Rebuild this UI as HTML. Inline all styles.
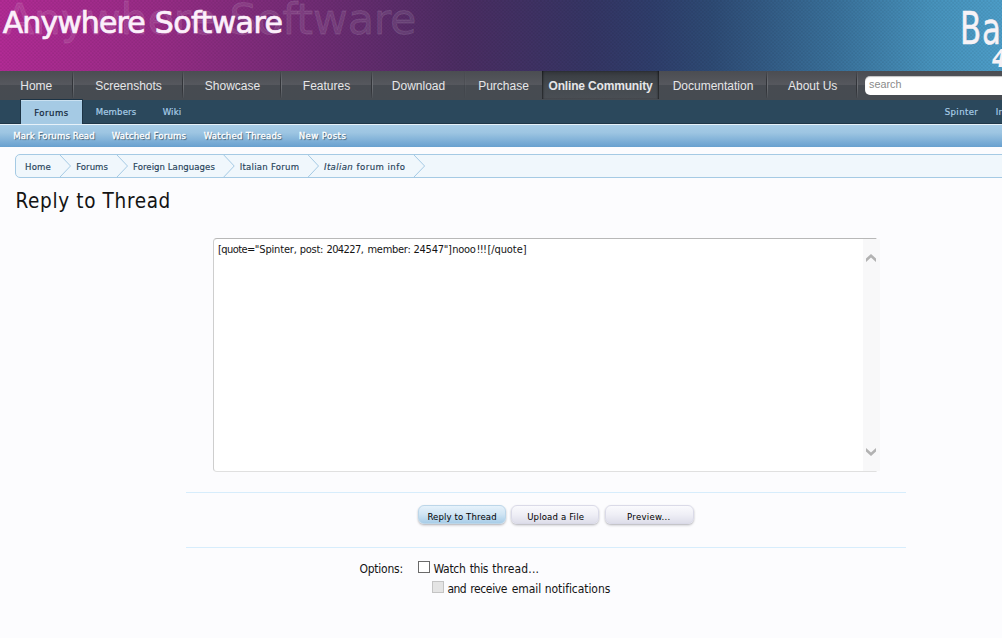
<!DOCTYPE html>
<html lang="en">
<head>
<meta charset="utf-8">
<title>Reply to Thread | Anywhere Software</title>
<style>
html,body{margin:0;padding:0;}
body{width:1002px;height:638px;overflow:hidden;background:#fcfcfe;font-family:"Liberation Sans",sans-serif;font-size:10px;color:#141414;position:relative;}
.L{font-family:"Liberation Sans",sans-serif;}
.D{font-family:"DejaVu Sans","Liberation Sans",sans-serif;}
.C{font-family:"DejaVu Sans Condensed","Liberation Sans",sans-serif;}
.tx{position:absolute;white-space:nowrap;display:block;}
#hdr{position:absolute;left:0;top:0;width:1002px;height:71px;overflow:hidden;
 background:linear-gradient(90deg,#b32b96 0px,#b02b94 12px,#972c86 162px,#712c75 312px,#4b2d63 462px,#353665 592px,#2f3e6c 652px,#2e4b75 712px,#39709a 832px,#4793bd 932px,#4d9ec9 1002px);}
#hdr .dots{position:absolute;left:0;top:0;display:block;}
#hdr .shade{display:none;}
#hdr .ghost{color:rgba(255,255,255,.09);}
#hdr .ttl{color:#fbeefa;-webkit-text-stroke:0.5px #fbeefa;}
#hdr .logo{position:absolute;left:960.3px;top:3px;-webkit-text-stroke:0.5px #f6f2f6;font-size:44px;line-height:52px;color:#f6f2f6;white-space:nowrap;transform:scaleX(.78);transform-origin:0 0;letter-spacing:1px;}
#hdr .logo4{position:absolute;left:991.500px;top:44px;font-style:italic;font-weight:bold;font-size:25px;line-height:30px;color:#f6f2f6;transform:scaleX(.85);transform-origin:0 0;}
#nav{position:absolute;left:0;top:71px;width:1002px;height:28.5px;background:linear-gradient(180deg,#4b4d52 0,#56585e 48%,#474b51 50%,#464b51 100%);font-size:12px;}
#nav a{position:absolute;top:0;height:28px;line-height:30px;text-align:center;color:#e6e6e8;text-decoration:none;white-space:nowrap;}
#nav .sep{position:absolute;top:1px;width:1px;height:26px;background:linear-gradient(180deg,rgba(50,52,57,.2),rgba(50,52,57,1) 30%,rgba(50,52,57,1) 70%,rgba(50,52,57,.2));}
#nav .sep:after{content:"";position:absolute;left:1px;top:0;width:1px;height:26px;background:linear-gradient(180deg,rgba(110,113,118,.1),rgba(110,113,118,.9) 40%,rgba(110,113,118,.9) 60%,rgba(110,113,118,.1));}
#nav a.act{font-weight:bold;letter-spacing:-0.17px;background:linear-gradient(180deg,#303338 0,#3c4045 18%,#454a4f 55%,#494e54 100%);box-shadow:inset 2px 0 2px -1px rgba(0,0,0,.55),inset -2px 0 2px -1px rgba(0,0,0,.55);color:#e6e6e8;}
#srch{position:absolute;left:865px;top:4.5px;width:160px;height:19px;background:#fff;border-radius:5px;box-shadow:inset 0 1px 1px rgba(0,0,0,.25);color:#8a8a8a;font-size:10.8px;line-height:17.5px;text-indent:4px;}
#tabs{position:absolute;left:0;top:99.5px;width:1002px;height:24.5px;background:#2b485c;box-shadow:inset 0 -1px 0 #1f3749;}
#tabs .sel{position:absolute;left:20px;top:-0.5px;width:63px;height:25px;box-sizing:border-box;border:1px solid #1c3345;border-bottom:0;background:#a5cae4;box-shadow:inset 0 1px 0 #c9e0f0;}
.tabtx{color:#a5cae4;}
.seltx{color:#18303f;}
#sub{position:absolute;left:0;top:124px;width:1002px;height:23px;background:linear-gradient(180deg,#a7cce6 0,#9dc5e2 35%,#68a0cf 100%);border-top:1px solid #e6f1f9;box-sizing:border-box;}
.subtx{color:#fff;text-shadow:1px 1px 1px #2b485c;}
#bc{position:absolute;left:15px;top:154px;width:1000px;height:24px;box-sizing:border-box;border:1px solid #a5cae4;border-radius:5px 0 0 5px;background:#f0f7fc;}
#bc svg{position:absolute;left:0;top:0;}
.bctx{color:#2b485c;}
#ta{position:absolute;left:213px;top:238px;width:664px;height:234px;box-sizing:border-box;background:#fff;border:1px solid #c0c0c0;border-color:#b8b8b8 #e4e4e4 #e0e0e0 #cecece;border-radius:4px 1px 1px 4px;}
#sb{position:absolute;left:863px;top:239px;width:16.5px;height:232px;background:#f8f8f9;}
#sb svg{display:block;}
.hr{position:absolute;left:186px;width:720px;height:1px;background:#d7edfc;}
.btn{position:absolute;top:505px;height:19px;box-sizing:border-box;border:1px solid #dadae8;border-radius:6px;background:linear-gradient(180deg,#fafafd 0,#efeff6 50%,#dedeea 100%);box-shadow:0 1px 2px rgba(0,0,20,.22),0 2px 3px rgba(0,0,20,.08);}
.btn.pri{background:linear-gradient(180deg,#e6f2fb 0,#cfe4f3 50%,#a8cde8 100%);border-color:#bcd6e9;}
.cb{position:absolute;width:12px;height:12px;box-sizing:border-box;border:1px solid #6a6a6a;background:#fff;}
.cb.dis{border-color:#c4c4c4;background:#e4e4e4;}
</style>
</head>
<body>
<div id="hdr"><svg class="dots" width="1002" height="71" viewBox="0 0 1002 71"><defs><pattern id="dp" width="3.6" height="3.6" patternUnits="userSpaceOnUse"><circle cx="0.9" cy="0.9" r="0.5" fill="#000" fill-opacity=".32"/><circle cx="2.7" cy="2.7" r="0.5" fill="#000" fill-opacity=".32"/></pattern></defs><rect width="1002" height="71" fill="url(#dp)"/></svg><div class="shade"></div>
<span class="tx D" style="left:4.7px;top:-8.88px;font-size:43px;line-height:56px;letter-spacing:-0.347px;color:rgba(255,255,255,.10);-webkit-text-stroke:0.9px rgba(255,255,255,.10)">Anywhere Software</span>
<span class="tx D" style="left:2.7px;top:3.12px;font-size:30px;line-height:39px;color:#fcf0fb;-webkit-text-stroke:0.7px #fcf0fb"><span style="letter-spacing:-0.917px">Anywhere</span> <span style="letter-spacing:-0.569px;margin-left:0.37px">Software</span></span>
<div class="logo C">Basic</div><div class="logo4 D">4</div>
</div>
<div id="nav">
<a style="left:0;width:72.500px">Home</a><span class="sep" style="left:72px"></span>
<a style="left:74px;width:109px">Screenshots</a><span class="sep" style="left:182px"></span>
<a style="left:184.500px;width:96px">Showcase</a><span class="sep" style="left:280px"></span>
<a style="left:282.500px;width:88px">Features</a><span class="sep" style="left:371px"></span>
<a style="left:372px;width:93px">Download</a><span class="sep" style="left:464px;opacity:.2"></span>
<a style="left:467px;width:73px">Purchase</a>
<a class="act" style="left:542px;width:117px">Online Community</a>
<a style="left:660px;width:106px">Documentation</a><span class="sep" style="left:766px"></span>
<a style="left:768.700px;width:88px">About Us</a><span class="sep" style="left:856px"></span>
<div id="srch">search</div>
</div>
<div id="tabs"><div class="sel"></div></div>
<span class="tx C" style="left:34.2px;top:106.71px;font-size:9.5px;line-height:12px;letter-spacing:0.514px;color:#12263a;-webkit-text-stroke:0.2px #12263a">Forums</span>
<span class="tx C" style="left:95.7px;top:105.71px;font-size:9.5px;line-height:12px;letter-spacing:0.139px;color:#a8cde7;-webkit-text-stroke:0.2px #a8cde7">Members</span>
<span class="tx C" style="left:162.7px;top:105.71px;font-size:9.5px;line-height:12px;letter-spacing:0.162px;color:#a8cde7;-webkit-text-stroke:0.2px #a8cde7">Wiki</span>
<span class="tx C" style="left:944.7px;top:105.71px;font-size:9.5px;line-height:12px;letter-spacing:0.403px;color:#a8cde7;-webkit-text-stroke:0.2px #a8cde7">Spinter</span>
<span class="tx C" style="left:995.7px;top:105.71px;font-size:9.5px;line-height:12px;letter-spacing:0.403px;color:#a8cde7;-webkit-text-stroke:0.2px #a8cde7">Inbox</span>
<div id="sub"></div>
<span class="tx C" style="left:13.2px;top:129.71px;font-size:9.5px;line-height:12px;letter-spacing:0.134px;color:#fff;-webkit-text-stroke:0.3px #fff;text-shadow:1px 1px 1px #2b485c">Mark Forums Read</span>
<span class="tx C" style="left:111.7px;top:129.71px;font-size:9.5px;line-height:12px;letter-spacing:0.224px;color:#fff;-webkit-text-stroke:0.3px #fff;text-shadow:1px 1px 1px #2b485c">Watched Forums</span>
<span class="tx C" style="left:203.7px;top:129.71px;font-size:9.5px;line-height:12px;letter-spacing:0.256px;color:#fff;-webkit-text-stroke:0.3px #fff;text-shadow:1px 1px 1px #2b485c">Watched Threads</span>
<span class="tx C" style="left:298.7px;top:129.71px;font-size:9.5px;line-height:12px;letter-spacing:0.438px;color:#fff;-webkit-text-stroke:0.3px #fff;text-shadow:1px 1px 1px #2b485c">New Posts</span>
<div id="bc">
<svg width="987" height="22" viewBox="0 0 987 22" fill="none" stroke="#a5cae4" stroke-width="1">
<path d="M44 0 L54.500 11 L44 22"/><path d="M101 0 L111.500 11 L101 22"/><path d="M207.800 0 L218.200 11 L207.800 22"/><path d="M292.200 0 L302.500 11 L292.200 22"/><path d="M398 0 L408.600 11 L398 22"/>
</svg>
</div>
<span class="tx C" style="left:25.1px;top:160.71px;font-size:9.5px;line-height:12px;letter-spacing:0.138px;color:#26425a;-webkit-text-stroke:0.15px #26425a">Home</span>
<span class="tx C" style="left:76.2px;top:160.71px;font-size:9.5px;line-height:12px;letter-spacing:0.047px;color:#26425a;-webkit-text-stroke:0.15px #26425a">Forums</span>
<span class="tx C" style="left:133.1px;top:160.71px;font-size:9.5px;line-height:12px;letter-spacing:0.050px;color:#26425a;-webkit-text-stroke:0.15px #26425a">Foreign Languages</span>
<span class="tx C" style="left:239.7px;top:160.71px;font-size:9.5px;line-height:12px;letter-spacing:0.254px;color:#26425a;-webkit-text-stroke:0.15px #26425a">Italian Forum</span>
<span class="tx C" style="left:324.0px;top:160.71px;font-size:9.5px;line-height:12px;color:#26425a;-webkit-text-stroke:0.15px #26425a"><span style="letter-spacing:0.369px"><i>Italian</i></span> <span style="letter-spacing:0.457px;margin-left:0.79px">forum info</span></span>
<span class="tx C" style="left:15.5px;top:187.61px;font-size:20.5px;line-height:27px;letter-spacing:0.656px;color:#141414">Reply to Thread</span>
<div id="ta"></div>
<div id="sb"><svg width="17" height="232" viewBox="0 0 17 232"><path fill="#b2b2b2" d="M3 19.500 L8 15 L13 19.500 L13 23 L8 18.500 L3 23 Z M3 209 L8 213.500 L13 209 L13 212.500 L8 217 L3 212.500 Z"/></svg></div>
<span class="tx C" style="left:218.0px;top:242.79px;font-size:11px;line-height:14px;color:#141414"><span style="letter-spacing:-0.562px">[quote="</span><span style="letter-spacing:-0.173px;margin-left:0.50px">Spinter,</span> <span style="letter-spacing:-0.244px;margin-left:-0.15px">post:</span> <span style="letter-spacing:-0.560px;margin-left:0.04px">204227,</span> <span style="letter-spacing:-0.281px;margin-left:0.94px">member:</span> <span style="letter-spacing:-0.284px;margin-left:-0.06px">24547"]</span><span style="letter-spacing:-0.284px;margin-left:0.79px">nooo</span><span style="letter-spacing:-0.669px;margin-left:0.79px">!!!</span><span style="letter-spacing:-0.068px;margin-left:1.11px">[/quote]</span></span>
<div class="hr" style="top:492px"></div>
<div class="btn pri" style="left:417.5px;width:88.5px"></div>
<div class="btn" style="left:510.500px;width:88.5px"></div>
<div class="btn" style="left:604.500px;width:89px"></div>
<span class="tx C" style="left:427.4px;top:511.01px;font-size:9.5px;line-height:12px;letter-spacing:0.120px;color:#000">Reply to Thread</span>
<span class="tx C" style="left:527.2px;top:511.01px;font-size:9.5px;line-height:12px;letter-spacing:0.157px;color:#000">Upload a File</span>
<span class="tx C" style="left:627.1px;top:511.01px;font-size:9.5px;line-height:12px;letter-spacing:0.278px;color:#000">Preview...</span>
<div class="hr" style="top:547px"></div>
<span class="tx C" style="left:359.5px;top:560.85px;font-size:12px;line-height:16px;letter-spacing:-0.250px;color:#141414">Options:</span>
<div class="cb" style="left:418px;top:561px;width:11.5px"></div>
<span class="tx C" style="left:433.4px;top:560.85px;font-size:12px;line-height:16px;color:#141414"><span style="letter-spacing:-0.269px">Watch</span> <span style="letter-spacing:-0.301px;margin-left:0.67px">this</span> <span style="letter-spacing:0.138px;margin-left:0.56px">thread...</span></span>
<div class="cb dis" style="left:432px;top:581px"></div>
<span class="tx C" style="left:447.4px;top:580.85px;font-size:12px;line-height:16px;color:#141414"><span style="letter-spacing:-0.609px">and</span> <span style="letter-spacing:-0.362px;margin-left:0.87px">receive</span> <span style="letter-spacing:-0.036px;margin-left:1.16px">email</span> <span style="letter-spacing:-0.057px;margin-left:-0.05px">notifications</span></span>
</body>
</html>
